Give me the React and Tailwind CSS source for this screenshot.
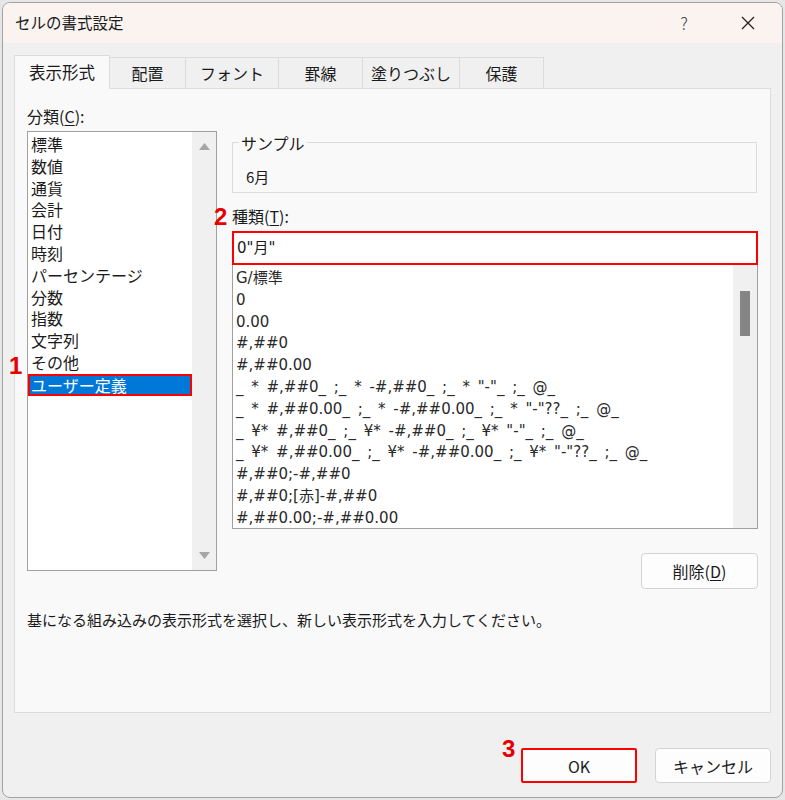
const categories = [
  "標準",
  "数値",
  "通貨",
  "会計",
  "日付",
  "時刻",
  "パーセンテージ",
  "分数",
  "指数",
  "文字列",
  "その他",
  "ユーザー定義",
];

const formats = [
  "G/標準",
  "0",
  "0.00",
  "#,##0",
  "#,##0.00",
  '_ * #,##0_ ;_ * -#,##0_ ;_ * "-"_ ;_ @_',
  '_ * #,##0.00_ ;_ * -#,##0.00_ ;_ * "-"??_ ;_ @_',
  '_ ¥* #,##0_ ;_ ¥* -#,##0_ ;_ ¥* "-"_ ;_ @_',
  '_ ¥* #,##0.00_ ;_ ¥* -#,##0.00_ ;_ ¥* "-"??_ ;_ @_',
  "#,##0;-#,##0",
  "#,##0;[赤]-#,##0",
  "#,##0.00;-#,##0.00",
];

const tabs = [
  ["表示形式", 96],
  ["配置", 76],
  ["フォント", 93],
  ["罫線", 84],
  ["塗りつぶし", 97],
  ["保護", 84],
];

const jp = "font-['Noto_Sans_CJK_JP',sans-serif]";
const mark = "absolute font-['Liberation_Sans',sans-serif] font-bold text-[24px] leading-none text-[#e60000]";

const App = () => {
  return (
    <div className={`w-[785px] h-[800px] bg-[#e6e6e6] p-[2px] ${jp} text-[#1b1b1b]`}>
      <div className="w-[781px] h-[796px] border border-[#a3a3a3] rounded-[8px] overflow-hidden bg-[#f0f0f0] flex flex-col">
        {/* Title bar */}
        <div className="h-[40px] bg-[#faf3f0] flex items-center pl-[12px] pr-[20px] shrink-0">
          <span className="text-[15.5px] leading-none">セルの書式設定</span>
          <span className="ml-auto text-[17px] font-light text-[#444] mr-[52px]">?</span>
          <svg width="16" height="16" viewBox="0 0 16 16" className="mr-[6px]">
            <path d="M2 2 L14 14 M14 2 L2 14" stroke="#222" strokeWidth="1.3" fill="none" />
          </svg>
        </div>

        {/* Tabs */}
        <div className="mt-[12px] ml-[11px] flex items-end h-[33px] shrink-0">
          {tabs.map(([label, w], i) =>
            i === 0 ? (
              <div
                key={label}
                className="relative z-10 -mb-px h-[34px] bg-[#f9f9f9] border border-b-0 border-[#dcdcdc] flex items-center justify-center text-[16.5px]"
                style={{ width: w }}
              >
                {label}
              </div>
            ) : (
              <div
                key={label}
                className="h-[31px] bg-[#f0f0f0] border-t border-r border-[#dcdcdc] flex items-center justify-center text-[16px]"
                style={{ width: w }}
              >
                {label}
              </div>
            )
          )}
        </div>

        {/* Panel */}
        <div className="ml-[11px] w-[757px] h-[625px] shrink-0 border border-[#dcdcdc] bg-[#f9f9f9] pl-[12px] pt-[17px] flex flex-col">
          <div className="flex">
            {/* Left column */}
            <div className="w-[190px]">
              <div className="h-[20px] leading-[20px] text-[16px]">
                分類(<span className="underline underline-offset-2">C</span>):
              </div>
              <div className="mt-[5px] h-[440px] border border-[#a0a0a0] bg-white flex">
                <div className="flex-1 pt-[2px]">
                  {categories.map((c) =>
                    c === "ユーザー定義" ? (
                      <div
                        key={c}
                        className="relative h-[22px] leading-[19px] bg-[#0078d7] text-white border-2 border-[#ff0000] pl-[1px] text-[16px]"
                      >
                        <span className={`${mark} -left-[21px] -top-[22px]`}>1</span>
                        {c}
                      </div>
                    ) : (
                      <div key={c} className="h-[21.8px] leading-[21.8px] pl-[3px] text-[16px]">
                        {c}
                      </div>
                    )
                  )}
                </div>
                <div className="w-[24px] bg-[#f0f0f0] flex flex-col items-center justify-between py-[11px]">
                  <svg width="11" height="7" viewBox="0 0 11 7">
                    <path d="M5.5 0 L11 7 L0 7 Z" fill="#a6a6a6" />
                  </svg>
                  <svg width="11" height="7" viewBox="0 0 11 7">
                    <path d="M0 0 L11 0 L5.5 7 Z" fill="#a6a6a6" />
                  </svg>
                </div>
              </div>
            </div>

            {/* Right column */}
            <div className="ml-[15px] w-[526px] pt-[36px]">
              <div className="relative h-[51px] w-[525px] border border-[#dcdcdc] pl-[13px] pt-[21px]">
                <span className="absolute left-[6px] -top-[10px] bg-[#f9f9f9] px-[2px] text-[16px] leading-[20px]">
                  サンプル
                </span>
                <span className="text-[15px] leading-[20px]">6月</span>
              </div>

              <div className="mt-[13px] h-[20px] leading-[20px] text-[16px]">
                種類(<span className="underline underline-offset-2">T</span>):
              </div>

              <div className="relative mt-[5px] h-[34px] border-2 border-[#ff0000] bg-white flex items-center pl-[3px] font-['DejaVu_Sans','Noto_Sans_CJK_JP',sans-serif] text-[15px]">
                <span className={`${mark} -left-[20px] -top-[28px]`}>2</span>
                0"月"
              </div>

              <div className="h-[264px] border border-t-0 border-[#a0a0a0] bg-white flex overflow-hidden">
                <div className="flex-1 pt-[3px] pl-[3px] font-['DejaVu_Sans','Noto_Sans_CJK_JP',sans-serif] text-[15px] text-[#2a2a2a] [word-spacing:3px]">
                  {formats.map((f) => (
                    <div key={f} className="h-[21.8px] leading-[21.8px] whitespace-pre">
                      {f}
                    </div>
                  ))}
                </div>
                <div className="w-[24px] bg-[#f0f0f0] pt-[26px] flex justify-center">
                  <div className="w-[10px] h-[45px] bg-[#858585]" />
                </div>
              </div>

              <div className="mt-[24px] flex justify-end">
                <button className="w-[117px] h-[36px] rounded-[4px] border border-[#d4d4d4] bg-[#fdfdfd] text-[16px]">
                  削除(<span className="underline underline-offset-2">D</span>)
                </button>
              </div>
            </div>
          </div>

          <div className="mt-[21px] h-[20px] leading-[20px] text-[15px]">
            基になる組み込みの表示形式を選択し、新しい表示形式を入力してください。
          </div>
        </div>

        {/* Buttons */}
        <div className="mt-[35px] pr-[11px] flex justify-end gap-[18px]">
          <button className="relative w-[116px] h-[35px] rounded-[2px] border-2 border-[#ff0000] bg-[#fdfdfd] text-[16px]">
            <span className={`${mark} -left-[21px] -top-[13px]`}>3</span>
            OK
          </button>
          <button className="w-[116px] h-[35px] rounded-[4px] border border-[#d4d4d4] bg-[#fdfdfd] text-[16px]">
            キャンセル
          </button>
        </div>
      </div>
    </div>
  );
};

export default App;
